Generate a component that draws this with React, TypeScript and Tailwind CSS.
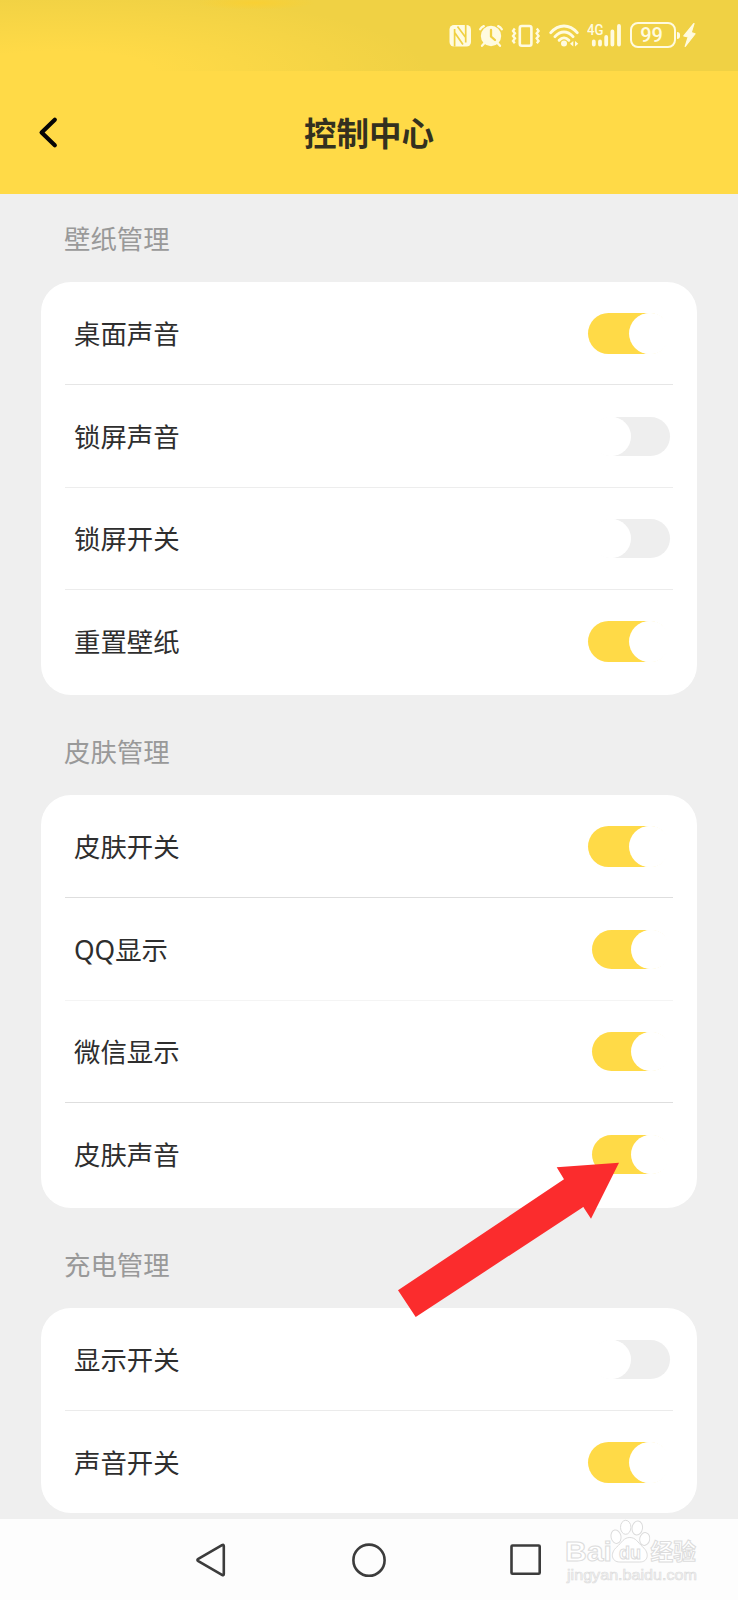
type ToggleSize = "sm" | "lg";

interface SettingItem {
  label: string;
  on: boolean;
  size: ToggleSize;
  divider?: string;
}

interface Section {
  title: string;
  items: SettingItem[];
}

const SECTIONS: Section[] = [
  {
    title: "壁纸管理",
    items: [
      { label: "桌面声音", on: true, size: "lg", divider: "border-[#e6e6e6]" },
      { label: "锁屏声音", on: false, size: "sm", divider: "border-[#ededed]" },
      { label: "锁屏开关", on: false, size: "sm", divider: "border-[#ececec]" },
      { label: "重置壁纸", on: true, size: "lg" },
    ],
  },
  {
    title: "皮肤管理",
    items: [
      { label: "皮肤开关", on: true, size: "lg", divider: "border-[#dedede]" },
      { label: "QQ显示", on: true, size: "sm", divider: "border-[#f4f4f4]" },
      { label: "微信显示", on: true, size: "sm", divider: "border-[#dedede]" },
      { label: "皮肤声音", on: true, size: "sm" },
    ],
  },
  {
    title: "充电管理",
    items: [
      { label: "显示开关", on: false, size: "sm", divider: "border-[#ebebeb]" },
      { label: "声音开关", on: true, size: "lg" },
    ],
  },
];

export default function App() {
  return (
    <div className="relative flex h-[1600px] w-[738px] flex-col overflow-hidden bg-[#efefef] font-['Noto_Sans_CJK_SC',sans-serif]">
      <StatusBar />
      <Header />
      <main className="h-[1325px] shrink-0 overflow-hidden">
        {SECTIONS.map((section) => (
          <SettingsSection key={section.title} section={section} />
        ))}
      </main>
      <NavBar />
      <Arrow />
      <Watermark />
    </div>
  );
}

function StatusBar() {
  return (
    <div className="flex h-[71px] shrink-0 items-start bg-[#f0d144] bg-[radial-gradient(ellipse_60px_7px_at_255px_3px,#fdcf2cb0_0%,#fdcf2c00_100%),radial-gradient(ellipse_370px_80px_at_60px_100%,#ffda47_25%,#ffda4700_100%)] pt-5 pl-[448px] text-[#fffbe0]">
      {/* NFC */}
      <svg className="h-[30px] w-[26px] shrink-0" viewBox="0 0 26 30">
        <rect x="1.5" y="5" width="21.5" height="21.5" rx="4.5" fill="currentColor" />
        <path d="M6.6 26.5V9M17.7 5v17.500M9.500 6.500l8.200 11M6.600 12.500 15 24.500" fill="none" stroke="#f0d144" strokeWidth="1.700" />
      </svg>
      {/* Alarm */}
      <svg className="ml-1 h-[30px] w-[28px] shrink-0" viewBox="0 0 28 30">
        <circle cx="13" cy="16" r="10.200" fill="currentColor" />
        <path
          d="M2.200 9.200C3 7.800 4.200 6.800 5.800 6.200M23.800 9.200C23 7.800 21.800 6.800 20.200 6.200M6.500 23 4 25.800M19.500 23l2.500 2.800"
          fill="none"
          stroke="currentColor"
          strokeWidth="2.300"
          strokeLinecap="round"
        />
        <path d="M13 10v6.500l4 3.500" fill="none" stroke="#f0d144" strokeWidth="2.300" strokeLinecap="round" />
      </svg>
      {/* Vibrate */}
      <svg className="ml-1 h-[30px] w-[32px] shrink-0" viewBox="0 0 32 30">
        <rect x="9.800" y="6" width="11.600" height="19.800" rx="2" fill="none" stroke="currentColor" strokeWidth="2.600" />
        <path
          d="M4.800 8.500 3 11l2 2.400L3 16l2 2.400L3 21l1.800 2.300M26.800 8.500 28.600 11l-2 2.400L28.600 16l-2 2.400L28.600 21l-1.800 2.300"
          fill="none"
          stroke="currentColor"
          strokeWidth="2.300"
        />
      </svg>
      {/* Wi-Fi */}
      <svg className="ml-[7px] h-[30px] w-[34px] shrink-0" viewBox="0 0 34 30">
        <path
          d="M1.800 12.600C9.500 3.700 20.500 3.700 28.200 12.600M6 16.600c5.500-6.200 12.500-6.200 18 0M10.200 20.300c2.900-3.300 6.700-3.300 9.600 0"
          fill="none"
          stroke="currentColor"
          strokeWidth="2.900"
          strokeLinecap="round"
        />
        <circle cx="15" cy="23.400" r="3" fill="currentColor" />
        <path d="m24.300 21.100-3.300 2.700 3.300 2.700zM26 21.100l3.300 2.700-3.300 2.700z" fill="currentColor" />
      </svg>
      {/* Mobile signal */}
      <svg className="ml-1 h-[30px] w-[38px] shrink-0" viewBox="0 0 38 30">
        <text x="0" y="15.200" fontSize="14.500" fontWeight="500" fontFamily="Roboto, sans-serif" textLength="16.500" lengthAdjust="spacingAndGlyphs" fill="currentColor">
          4G
        </text>
        <path
          d="M6.800 21.500v3M13 21.500v3M19.200 17v7.500M25.400 11.500v13M32 6v18.500"
          stroke="currentColor"
          strokeWidth="3.800"
          strokeLinecap="round"
        />
      </svg>
      {/* Battery */}
      <div className="mt-[2px] ml-[5px] flex shrink-0 items-center gap-px">
        <div className="flex h-[26px] w-[46px] items-center justify-center rounded-[8px] border-2 border-current pr-[3px] font-['Roboto',sans-serif] text-[20px] leading-none font-medium">
          99
        </div>
        <div className="h-[7px] w-[3px] rounded-r-full bg-current" />
      </div>
      <svg className="ml-[2px] h-[30px] w-[16px] shrink-0" viewBox="0 0 16 30">
        <path
          d="M12 3.500 1.800 16 6.200 17 3.200 26.500 13 13.800 9.200 12.500z"
          fill="currentColor"
          stroke="currentColor"
          strokeWidth="1.200"
          strokeLinejoin="round"
        />
      </svg>
    </div>
  );
}

function Header() {
  return (
    <header className="grid h-[123px] shrink-0 grid-cols-[100px_1fr_100px] items-center bg-[#ffda47] pb-px">
      <svg className="ml-9 h-9 w-6" viewBox="0 0 24 36" fill="none">
        <path d="M18.800 5.800 5.600 18.500 18.800 31.200" stroke="#050505" strokeWidth="4.200" strokeLinecap="round" strokeLinejoin="round" />
      </svg>
      <h1 className="pb-px text-center text-[32.500px] leading-[48px] font-bold text-[#33301f]">控制中心</h1>
    </header>
  );
}

function SettingsSection({ section }: { section: Section }) {
  return (
    <section className="group mb-[12.400px]">
      <h2 className="flex h-[88.400px] items-center pl-16 text-[26.400px] leading-none text-[#999999]">
        {section.title}
      </h2>
      <div className="mx-[41px] rounded-[30px] bg-white px-6 pb-[1.800px] group-last:pb-0">
        {section.items.map((item) => (
          <SettingRow key={item.label} item={item} />
        ))}
      </div>
    </section>
  );
}

function SettingRow({ item }: { item: SettingItem }) {
  return (
    <div
      className={`flex h-[102.600px] items-center justify-between pr-[3px] pl-[9px] ${
        item.divider ? `border-b ${item.divider}` : ""
      }`}
    >
      <span className="pt-[2px] font-['Noto_Sans','Noto_Sans_CJK_SC',sans-serif] text-[26.400px] leading-none text-[#2e2e2e]">
        {item.label}
      </span>
      <Toggle on={item.on} size={item.size} />
    </div>
  );
}

function Toggle({ on, size }: { on: boolean; size: ToggleSize }) {
  return (
    <div
      className={`flex rounded-full ${size === "lg" ? "h-[41px] w-[82px]" : "mt-px h-[39px] w-[78px]"} ${
        on ? "justify-end bg-[#ffda47]" : "justify-start bg-[#eeeeee]"
      }`}
    >
      <div
        className={`rounded-full bg-white ${size === "lg" ? "size-[41px]" : "size-[39px]"} ${
          on ? "shadow-[1px_0_0_0_#fff]" : "shadow-[-1px_0_0_0_#fff]"
        }`}
      />
    </div>
  );
}

function NavBar() {
  return (
    <nav className="flex h-[81px] shrink-0 items-center bg-[#fdfdfd] pl-[192px] text-[#3c3c3c]">
      <svg className="h-10 w-9" viewBox="0 0 36 40" fill="none" stroke="currentColor" strokeWidth="2.600" strokeLinejoin="round">
        <path d="M6.300 18.900 30 5.100q1.800-1 1.800.900v28q0 1.900-1.800.900L6.300 21.100q-1.800-1.100 0-2.200z" />
      </svg>
      <svg className="ml-[121px] h-10 w-10" viewBox="0 0 40 40" fill="none" stroke="currentColor" strokeWidth="2.600">
        <circle cx="20" cy="20.200" r="15.600" />
      </svg>
      <svg className="ml-[117px] h-10 w-10" viewBox="0 0 40 40" fill="none" stroke="currentColor" strokeWidth="2.600">
        <rect x="5.500" y="5.500" width="28.200" height="28.200" rx="1" />
      </svg>
    </nav>
  );
}

function Arrow() {
  return (
    <svg className="absolute top-[1160px] left-[396px] h-[160px] w-[226px]" viewBox="0 0 226 160">
      <path d="M2 130.300 168 19.300 160.700 7.300 223 2.700 195 58.700 187.300 47 19.700 157z" fill="#fb2c2d" />
    </svg>
  );
}

function Watermark() {
  return (
    <svg
      className="absolute top-[1516px] left-[562px] h-[74px] w-[140px]"
      viewBox="0 0 140 74"
      fill="#ffffff"
      stroke="#dcdcdc"
      strokeWidth="1"
      fontFamily="'Liberation Sans', 'Noto Sans CJK SC', sans-serif"
    >
      <text x="3" y="44.500" fontSize="28" fontWeight="700" textLength="47" lengthAdjust="spacingAndGlyphs">
        Bai
      </text>
      <ellipse cx="54" cy="20.700" rx="5" ry="6.800" transform="rotate(-12 54 20.700)" />
      <ellipse cx="63.700" cy="11.300" rx="5.200" ry="7" />
      <ellipse cx="75.300" cy="12" rx="5.200" ry="7" transform="rotate(8 75.300 12)" />
      <ellipse cx="82.700" cy="23" rx="5" ry="6.500" transform="rotate(12 82.700 23)" />
      <path d="M67.800 21.500c-6 0-8 5-13 9.500-7 6-5.500 15 3 15h20c8.500 0 10-9 3-15-5-4.500-7-9.500-13-9.500z" />
      <text x="57" y="43" fontSize="19" fontWeight="700" textLength="22" lengthAdjust="spacingAndGlyphs">
        du
      </text>
      <text x="88.500" y="43.500" fontSize="23" fontWeight="700" textLength="45.500" lengthAdjust="spacingAndGlyphs">
        经验
      </text>
      <text x="5" y="64" fontSize="14.500" textLength="130" lengthAdjust="spacingAndGlyphs" strokeWidth="0.600" fill="#f6f6f6">
        jingyan.baidu.com
      </text>
    </svg>
  );
}
